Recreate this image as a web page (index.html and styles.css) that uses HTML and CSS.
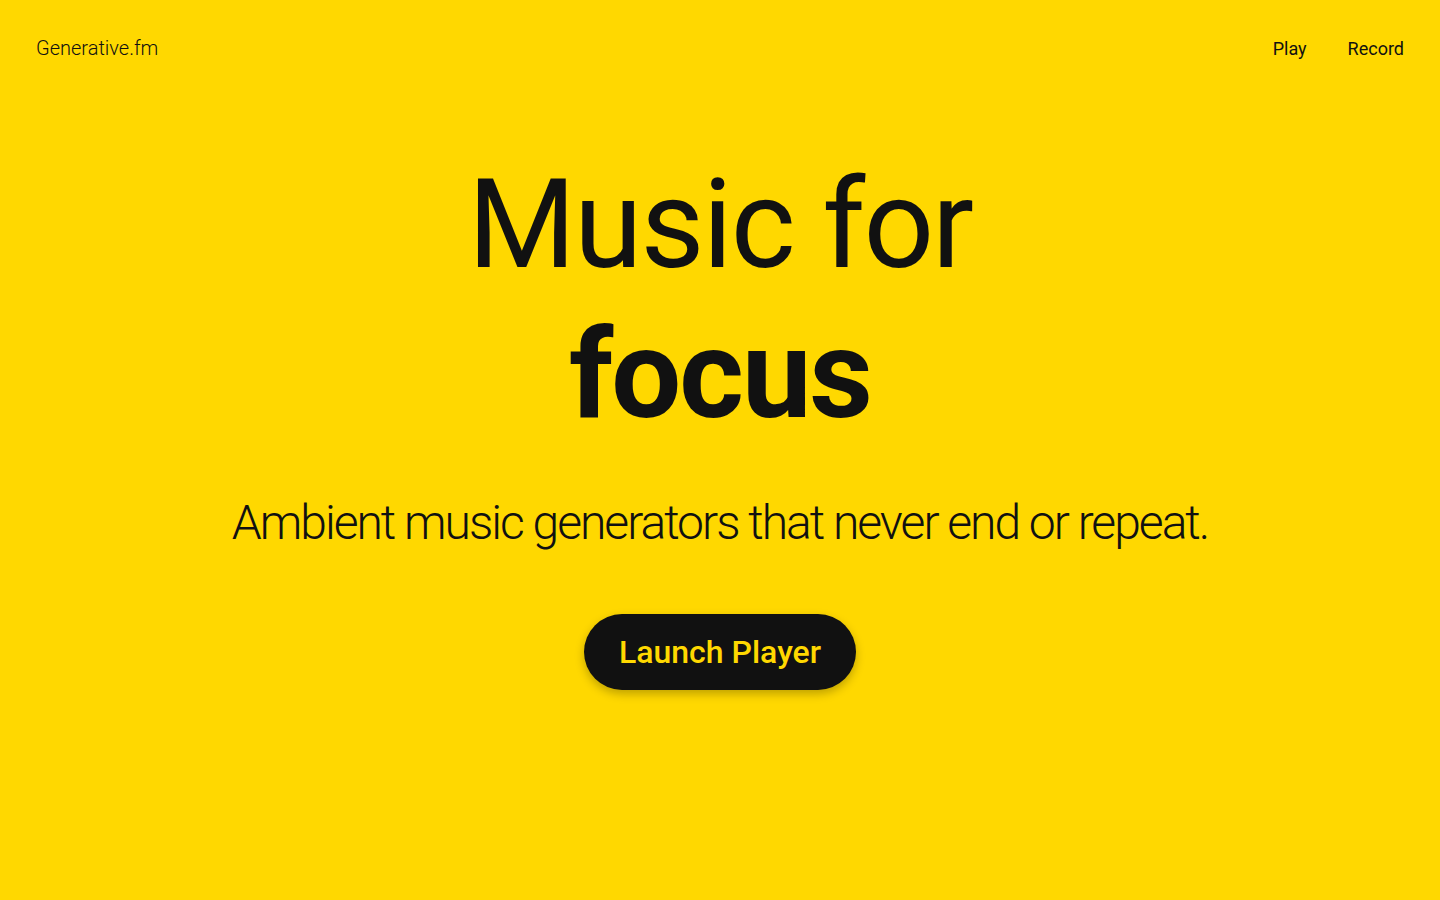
FILE: index.html
```html
<!DOCTYPE html>
<html lang="en">
<head>
<meta charset="utf-8">
<title>Generative.fm</title>
<link rel="stylesheet" href="styles.css">
</head>
<body>
<div class="page">
  <header class="top">
    <a class="logo" href="#">Generative.fm</a>
    <nav class="nav">
      <a href="#">Play</a>
      <a href="#">Record</a>
    </nav>
  </header>
  <main class="hero">
    <h1 class="title"><span class="title-light">Music for</span><span class="title-bold">focus</span></h1>
    <p class="subtitle">Ambient music generators that never end or repeat.</p>
    <a class="cta" href="#">Launch Player</a>
  </main>
</div>
</body>
</html>
```
FILE: styles.css
```css
html, body {
  margin: 0;
  padding: 0;
  background: #ffd800;
}
body {
  font-family: Roboto, "Liberation Sans", sans-serif;
  color: #111;
}
a { color: inherit; text-decoration: none; }
.page {
  min-height: 900px;
  display: flex;
  flex-direction: column;
}
.top {
  display: flex;
  justify-content: space-between;
  align-items: center;
  padding: 36px 36px 0 36px;
  height: 24px;
}
.logo {
  font-weight: 300;
  font-size: 20px;
}
.nav {
  display: flex;
  gap: 41px;
  font-size: 18px;
}
.hero {
  display: flex;
  flex-direction: column;
  align-items: center;
  padding-top: 90px;
}
.title {
  margin: 0;
  display: flex;
  flex-direction: column;
  align-items: center;
  font-size: 124px;
  line-height: 150px;
  font-weight: 400;
}
.title-light { letter-spacing: -2px; }
.title-bold { font-weight: 700; letter-spacing: -2px; }
.subtitle {
  margin: 44px 0 0 0;
  font-size: 48px;
  font-weight: 300;
  letter-spacing: -2px;
}
.cta {
  margin-top: 63px;
  background: #111;
  color: #ffd800;
  font-size: 32px;
  font-weight: 500;
  padding: 0 35px;
  height: 76px;
  line-height: 76px;
  border-radius: 38px;
  box-shadow: 0 4px 10px rgba(0,0,0,0.25);
}
```
